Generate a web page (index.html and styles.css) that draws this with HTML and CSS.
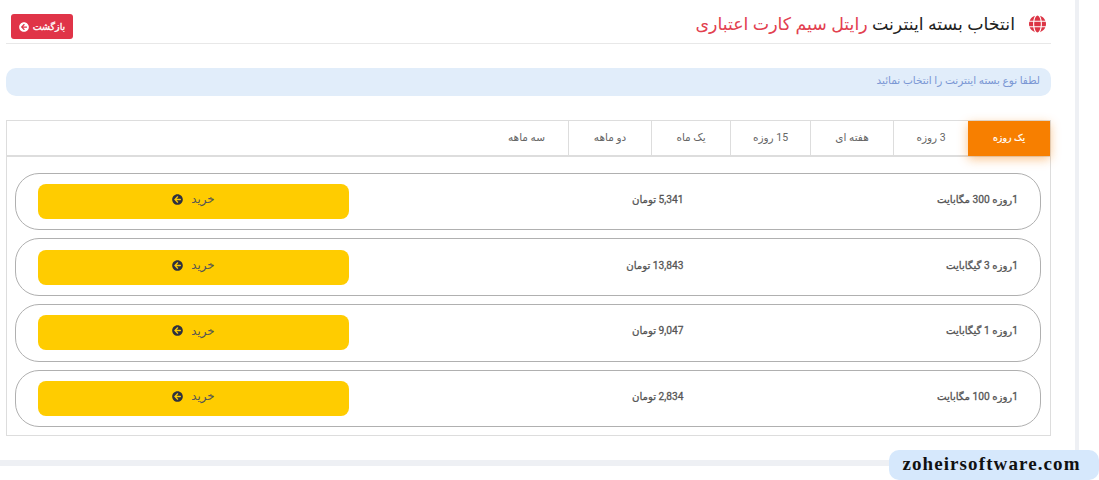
FILE: index.html
```html
<!DOCTYPE html>
<html lang="fa" dir="rtl">
<head>
<meta charset="utf-8">
<title>انتخاب بسته اینترنت</title>
<link rel="stylesheet" href="styles.css">
</head>
<body>
<svg class="defs" width="0" height="0" aria-hidden="true">
  <symbol id="arrow" viewBox="0 0 512 512"><path d="M256 504C119 504 8 393 8 256S119 8 256 8s248 111 248 248-111 248-248 248zm28.9-143.6L209.4 288H392c13.3 0 24-10.7 24-24v-16c0-13.3-10.7-24-24-24H209.4l75.5-72.4c9.7-9.3 9.9-24.8.4-34.3l-11-10.9c-9.4-9.4-24.6-9.4-33.9 0L107.7 239c-9.4 9.4-9.4 24.6 0 33.9l132.7 132.7c9.4 9.4 24.6 9.4 33.9 0l11-10.9c9.5-9.5 9.3-25-.4-34.3z"/></symbol>
</svg>
<main class="page">
  <header class="head">
    <h1 class="title">
      <svg class="globe" viewBox="0 0 496 512"><path d="M336.5 160C322 70.7 287.8 8 248 8s-74 62.7-88.5 152h177zM152 256c0 22.2 1.2 43.5 3.3 64h185.3c2.1-20.5 3.3-41.8 3.3-64s-1.2-43.5-3.3-64H155.3c-2.1 20.5-3.3 41.8-3.3 64zm324.7-96c-28.6-67.9-86.5-120.4-158-141.6 24.4 33.8 41.2 84.7 50 141.6h108zM177.2 18.4C105.8 39.6 47.8 92.1 19.3 160h108c8.7-56.9 25.5-107.8 49.9-141.6zM487.4 192H372.7c2.1 21 3.3 42.5 3.3 64s-1.2 43-3.3 64h114.6c5.5-20.5 8.6-41.8 8.6-64s-3.1-43.5-8.5-64zM120 256c0-21.5 1.2-43 3.3-64H8.6C3.2 212.5 0 233.8 0 256s3.2 43.5 8.6 64h114.6c-2-21-3.2-42.5-3.2-64zm39.5 96c14.5 89.3 48.7 152 88.5 152s74-62.7 88.5-152h-177zm159.3 141.6c71.4-21.2 129.4-73.7 158-141.6h-108c-8.8 56.9-25.6 107.8-50 141.6zM19.3 352c28.6 67.9 86.5 120.4 158 141.6-24.4-33.8-41.2-84.7-50-141.6h-108z"/></svg>
      <span>انتخاب بسته اینترنت <em class="accent">رایتل سیم کارت اعتباری</em></span>
    </h1>
    <a class="back">بازگشت <svg class="ico"><use href="#arrow"/></svg></a>
  </header>
  <p class="alert">لطفا نوع بسته اینترنت را انتخاب نمائید</p>
  <section class="box">
    <nav class="tabs">
      <a class="tab active">یک روزه</a>
      <a class="tab">3 روزه</a>
      <a class="tab">هفته ای</a>
      <a class="tab">15 روزه</a>
      <a class="tab">یک ماه</a>
      <a class="tab">دو ماهه</a>
      <a class="tab last">سه ماهه</a>
    </nav>
    <div class="list">
      <div class="row"><b class="cell">1روزه 300 مگابایت</b><b class="cell">5,341 تومان</b><a class="buy">خرید <svg class="ico"><use href="#arrow"/></svg></a></div>
      <div class="row"><b class="cell">1روزه 3 گیگابایت</b><b class="cell">13,843 تومان</b><a class="buy">خرید <svg class="ico"><use href="#arrow"/></svg></a></div>
      <div class="row"><b class="cell">1روزه 1 گیگابایت</b><b class="cell">9,047 تومان</b><a class="buy">خرید <svg class="ico"><use href="#arrow"/></svg></a></div>
      <div class="row"><b class="cell">1روزه 100 مگابایت</b><b class="cell">2,834 تومان</b><a class="buy">خرید <svg class="ico"><use href="#arrow"/></svg></a></div>
    </div>
  </section>
</main>
<div class="mark" dir="ltr">zoheirsoftware.com</div>
</body>
</html>
```

FILE: styles.css
```css
* { box-sizing: border-box; }
html, body { margin: 0; height: 480px; overflow: hidden; background: #fff; }
body { position: relative; font-family: Roboto, "DejaVu Sans", sans-serif; color: #333; }
.defs { position: absolute; }

.page {
  width: 1079px;
  height: 466px;
  margin-right: 20px;
  padding: 0 28px 0 6px;
  border-bottom: 6px solid #eef0f4;
  background: #fff;
  position: relative;
}
.page::after {
  content: "";
  position: absolute;
  top: 0;
  right: 0;
  width: 4px;
  height: 460px;
  background: #eef0f4;
}

.head {
  display: flex;
  justify-content: space-between;
  align-items: flex-start;
  height: 44px;
  padding: 14px 0 0 5px;
  border-bottom: 1px solid #e8e8e8;
}
.title {
  display: flex;
  align-items: center;
  gap: 14px;
  margin: 0 5px 0 0;
  font-size: 17.4px;
  line-height: 20px;
  font-weight: 400;
  color: #222;
}
.globe { width: 17px; height: 18px; fill: #dc3545; flex: none; }
.accent { font-style: normal; color: #e2404f; }

.back {
  display: flex;
  align-items: center;
  justify-content: center;
  gap: 4px;
  width: 62px;
  height: 25px;
  border-radius: 3px;
  background: #e03448;
  color: #fff;
  font-size: 9.5px;
  -webkit-text-stroke: .3px #fff;
}
.ico { width: 10px; height: 10px; fill: currentColor; flex: none; }

.alert {
  height: 28px;
  margin: 24px 0;
  padding: 0 11px;
  border-radius: 10px;
  background: #e1edfa;
  color: #7a97d4;
  font-size: 10.5px;
  line-height: 26px;
}

.box {
  height: 316px;
  border: 1px solid #dddddd;
}
.tabs {
  display: grid;
  grid-template-columns: 82px 75px 83px 80px 79px 83px 83px;
  height: 36px;
  border-bottom: 2px solid #dddddd;
}
.tab {
  display: flex;
  align-items: center;
  justify-content: center;
  height: 35px;
  padding-bottom: 3px;
  border-left: 1px solid #dddddd;
  color: #666;
  font-size: 10.5px;
}
.tab.last { border-left: 0; }
.tab.active {
  border-left: 0;
  background: #f77f00;
  color: #fff;
  font-size: 9.5px;
  -webkit-text-stroke: .2px #fff;
  box-shadow: 0 3px 10px rgba(247, 127, 0, .45);
  position: relative;
}

.list {
  display: flex;
  flex-direction: column;
  gap: 8px;
  padding: 15.8px 9px 0 8px;
}
.row {
  display: flex;
  align-items: flex-start;
  height: 57.67px;
  padding: 10.2px 22px 0;
  border: 1px solid #b0b0b0;
  border-radius: 24px;
}
.cell {
  flex: 1;
  padding-top: 8px;
  font-size: 10.2px;
  font-weight: 400;
  line-height: 16px;
  color: #555;
  -webkit-text-stroke: .3px #555;
}
.buy {
  display: flex;
  align-items: center;
  justify-content: center;
  gap: 8px;
  flex: none;
  width: 311px;
  height: 35px;
  padding-bottom: 4px;
  border-radius: 8px;
  background: #ffcc00;
  color: #555;
  font-size: 11.8px;
}
.buy .ico { width: 11px; height: 11px; color: #2d3040; }

.mark {
  position: absolute;
  right: 0;
  bottom: 0;
  width: 210px;
  height: 30px;
  padding: 0 5px 0 0;
  border-radius: 10px;
  background: #d6e8fc;
  color: #111;
  font-family: "Liberation Serif", serif;
  font-size: 19px;
  font-weight: 700;
  letter-spacing: 1.1px;
  line-height: 28px;
  text-align: center;
}
```
